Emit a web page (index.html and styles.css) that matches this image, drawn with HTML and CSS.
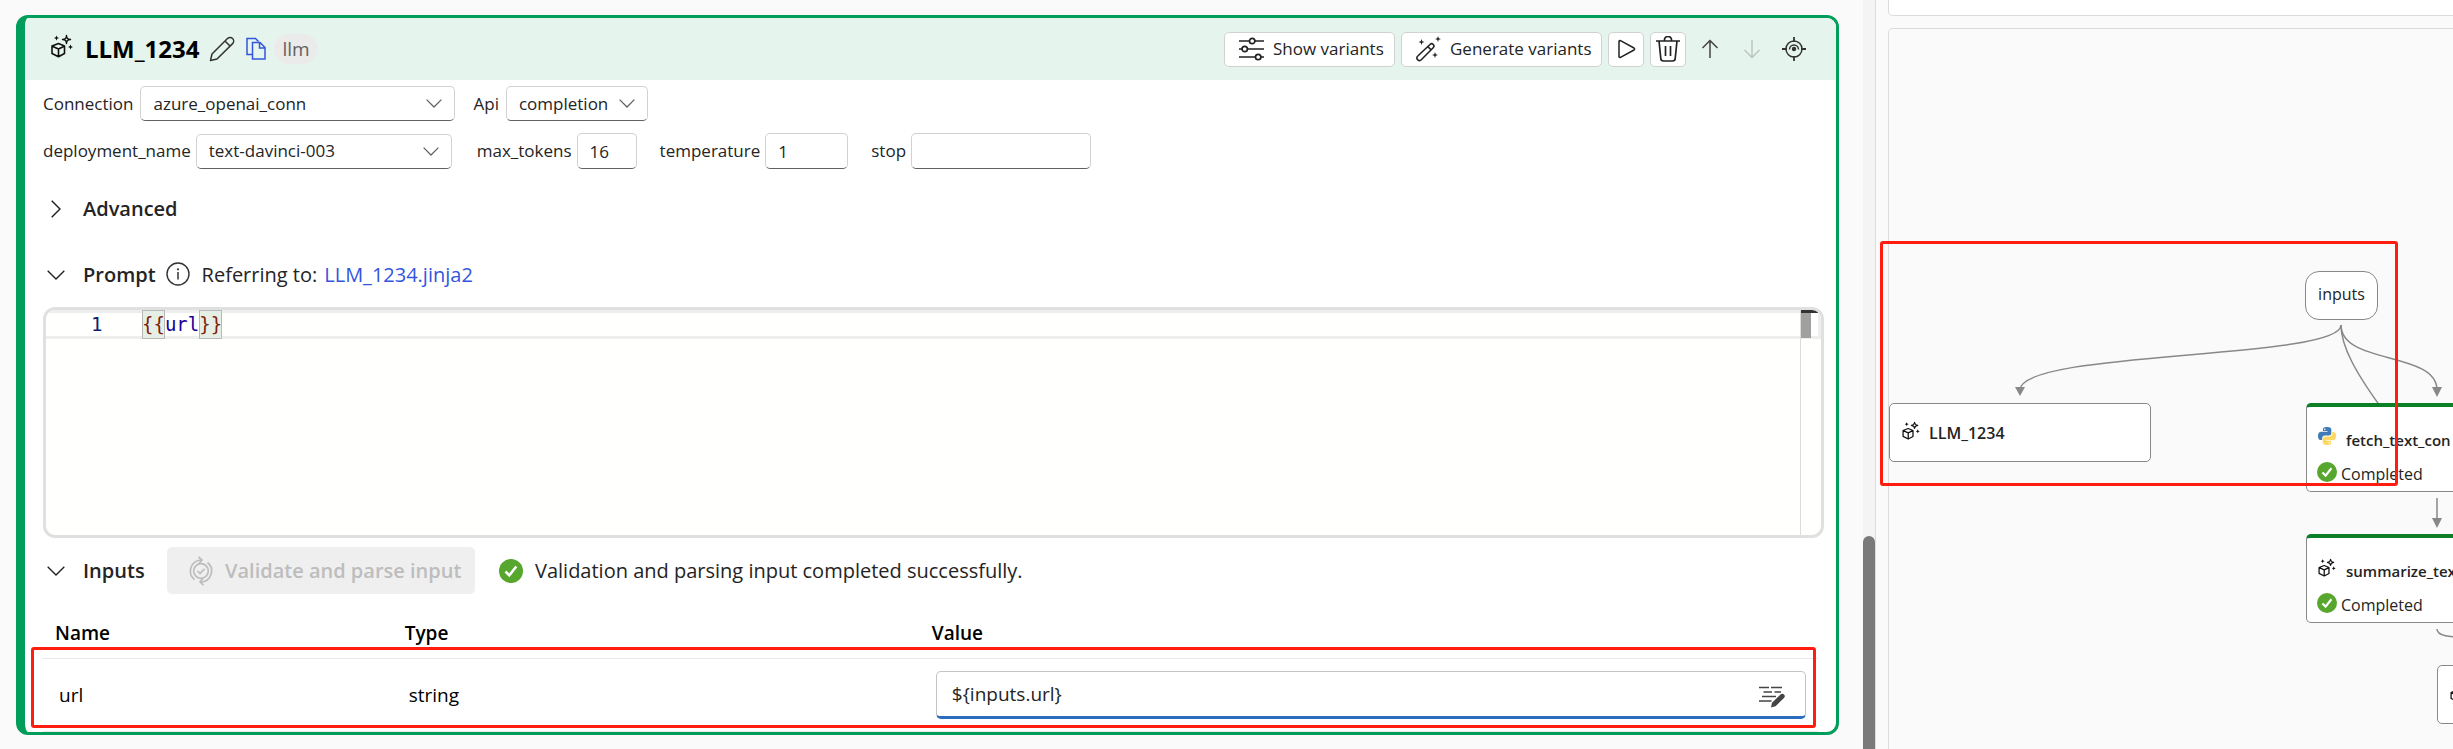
FILE: index.html
```html
<!DOCTYPE html>
<html lang="en">
<head>
<meta charset="utf-8">
<title>Prompt flow</title>
<link rel="stylesheet" href="styles.css">
</head>
<body>
<svg class="defs" aria-hidden="true">
  <symbol id="i-llm" viewBox="0 0 22 24">
    <g fill="none" stroke="#111" stroke-width="1.6" stroke-linejoin="round">
      <path d="M7.500 9.500L13.500 12V19.500L7.500 22.700L1 19.500V12ZM1.200 12.200L7.500 15L13.300 12.200M7.500 15V22.500"/>
      <path d="M15.500 1.500C15.800 4.500 16.500 5.200 19.500 5.500C16.500 5.800 15.800 6.500 15.500 9.500C15.200 6.500 14.500 5.800 11.500 5.500C14.500 5.200 15.200 4.500 15.500 1.500Z" stroke-width="1.400"/>
    </g>
    <path fill="#111" d="M5.500 1.500L6.300 3.200L8 4L6.300 4.800L5.500 6.500L4.700 4.800L3 4L4.700 3.200ZM19.500 10.500L20.300 12.200L22 13L20.300 13.800L19.500 15.500L18.700 13.800L17 13L18.700 12.200Z"/>
  </symbol>
  <symbol id="i-down" viewBox="0 0 18 10">
    <path d="M.7 .7L9 9L17.300 .7" fill="none" stroke="currentColor" stroke-width="1.400"/>
  </symbol>
  <symbol id="i-check" viewBox="0 0 24 24">
    <circle cx="12" cy="12" r="12" fill="#57a62e"/>
    <path d="M6.500 12.500L10.300 16.300L17.300 7.500" fill="none" stroke="#fff" stroke-width="2.600"/>
  </symbol>
</svg>
<div class="app">
  <main class="editor-pane">
    <section class="card">
      <header class="card-head">
        <svg class="ic-llm"><use href="#i-llm"/></svg>
        <h1>LLM_1234</h1>
        <button class="plain edit" aria-label="Rename">
          <svg width="26" height="26" viewBox="0 0 26 26" fill="none" stroke="#333" stroke-width="1.500" stroke-linejoin="round"><path d="M1.500 24.500L3 18L18.500 2.500A3.600 3.600 0 0 1 23.600 7.600L8 23ZM16 5L21 10"/></svg>
        </button>
        <button class="plain copy" aria-label="Copy">
          <svg width="20" height="24" viewBox="0 0 20 24" fill="none" stroke="#3355e0" stroke-width="1.500"><path d="M6 17.500H1V1.500H9.500L12.500 4.500"/><path d="M6.500 5.500H14L19 10.500V22H6.500ZM13.500 5.500V11H19"/></svg>
        </button>
        <span class="pill">llm</span>
        <div class="actions">
          <button class="btn show">
            <svg width="26" height="24" viewBox="0 0 26 24" fill="none" stroke="#222" stroke-width="1.700"><path d="M0 4H10.500M16 4H25M0 12H3M8.500 12H25M0 20H16.500M22 20H25"/><circle cx="13.200" cy="4" r="2.700"/><circle cx="5.700" cy="12" r="2.700"/><circle cx="19.200" cy="20" r="2.700"/></svg>
            Show variants
          </button>
          <button class="btn generate">
            <svg width="26" height="26" viewBox="0 0 26 26" fill="none" stroke="#222" stroke-width="1.600"><path d="M1.800 20L14 8.500A2.200 2.200 0 0 1 17.200 11.700L5 24A2.400 2.400 0 0 1 1.800 20ZM11.800 10.600L15 13.800"/><path fill="#222" stroke="none" d="M5.500 3L6.300 5.200L8.500 6L6.300 6.800L5.500 9L4.700 6.800L2.500 6L4.700 5.200ZM22 0L22.800 2.200L25 3L22.800 3.800L22 6L21.200 3.800L19 3L21.200 2.200ZM19 16L19.800 18.200L22 19L19.800 19.800L19 22L18.200 19.800L16 19L18.200 18.200Z"/></svg>
            Generate variants
          </button>
          <button class="btn square" aria-label="Run">
            <svg width="20" height="20" viewBox="0 0 20 20" fill="none" stroke="#222" stroke-width="1.500" stroke-linejoin="round"><path d="M3 2.500Q3 1 4.500 1.700L18 9Q19.200 10 18 11L4.500 18.300Q3 19 3 17.500Z"/></svg>
          </button>
          <button class="btn square" aria-label="Delete">
            <svg width="24" height="26" viewBox="0 0 24 26" fill="none" stroke="#222" stroke-width="1.700"><path d="M0 5H24M8.500 5V3.500A3.500 3 0 0 1 15.500 3.500V5M3 5L4.800 22.500Q5 25 7.500 25H16.500Q19 25 19.200 22.500L21 5M9.500 10V20M14.500 10V20"/></svg>
          </button>
          <button class="plain step" aria-label="Move up">
            <svg width="18" height="20" viewBox="0 0 18 20" fill="none" stroke="#444" stroke-width="1.500"><path d="M9 19V1.500M1.500 9L9 1.500L16.500 9"/></svg>
          </button>
          <button class="plain step" aria-label="Move down" disabled>
            <svg width="18" height="20" viewBox="0 0 18 20" fill="none" stroke="#bcc5c0" stroke-width="1.500"><path d="M9 1V18.500M1.500 11L9 18.500L16.500 11"/></svg>
          </button>
          <button class="plain step" aria-label="Locate in graph">
            <svg width="24" height="24" viewBox="0 0 24 24" fill="none" stroke="#333" stroke-width="1.500"><circle cx="12" cy="12" r="8"/><path d="M12 0V5M12 19V24M0 12H5M19 12H24" stroke-width="1.800"/><path d="M7.500 12.500A4.500 4.500 0 1 1 16.500 12.500"/><circle cx="12" cy="12" r="2.200" fill="#333" stroke="none"/></svg>
          </button>
        </div>
      </header>
      <div class="card-body">
        <div class="fields">
          <label for="conn">Connection</label>
          <span class="pick conn"><select id="conn"><option>azure_openai_conn</option></select><svg><use href="#i-down"/></svg></span>
          <label for="api">Api</label>
          <span class="pick api"><select id="api"><option>completion</option></select><svg><use href="#i-down"/></svg></span>
        </div>
        <div class="fields second">
          <label for="dep">deployment_name</label>
          <span class="pick dep"><select id="dep"><option>text-davinci-003</option></select><svg><use href="#i-down"/></svg></span>
          <label for="max">max_tokens</label>
          <input class="field max" id="max" value="16">
          <label for="temp">temperature</label>
          <input class="field temp" id="temp" value="1">
          <label for="stop">stop</label>
          <input class="field stop" id="stop">
        </div>
        <div class="section advanced">
          <button class="plain toggle" aria-label="Expand Advanced"><svg width="10" height="18" viewBox="0 0 10 18" fill="none" stroke="#222" stroke-width="1.500"><path d="M.7 .7L9 9L.7 17.300"/></svg></button>
          <h2>Advanced</h2>
        </div>
        <div class="section prompt">
          <button class="plain toggle" aria-label="Collapse Prompt"><svg class="chev"><use href="#i-down"/></svg></button>
          <h2>Prompt</h2>
          <svg class="info" viewBox="0 0 24 24"><circle cx="12" cy="12" r="11" fill="none" stroke="#333" stroke-width="1.400"/><path d="M12 10V17.500" stroke="#333" stroke-width="1.500"/><circle cx="12" cy="7.300" r="1.100" fill="#333"/></svg>
          <span>Referring to:</span>
          <a href="#file">LLM_1234.jinja2</a>
        </div>
        <div class="code">
          <div class="code-line">
            <span class="num">1</span>
            <code><span class="brace">{{</span><span class="var">url</span><span class="brace">}}</span></code>
          </div>
          <div class="ruler"><i class="mark"></i><i class="thumb"></i></div>
        </div>
        <div class="section inputs">
          <button class="plain toggle" aria-label="Collapse Inputs"><svg class="chev"><use href="#i-down"/></svg></button>
          <h2>Inputs</h2>
          <button class="validate" disabled>
            <svg width="24" height="30" viewBox="0 0 24 30" fill="none" stroke="#bdbdbd" stroke-width="1.700"><circle cx="12" cy="15" r="7.300"/><path d="M8.500 15L11 17.500L15.500 12.800M5.500 23.500A11 11 0 0 1 12 4M9.500 .8L13 4L10 7.500M18.500 6.500A11 11 0 0 1 12 26M14.500 29.200L11 26L14 22.500"/></svg>
            Validate and parse input
          </button>
          <svg class="ok"><use href="#i-check"/></svg>
          <span>Validation and parsing input completed successfully.</span>
        </div>
        <div class="table-wrap">
          <table>
            <thead><tr><th class="c-name">Name</th><th class="c-type">Type</th><th>Value</th></tr></thead>
            <tbody><tr>
              <td id="row-url">url</td>
              <td>string</td>
              <td><div class="value"><input aria-labelledby="row-url" value="${inputs.url}">
                <svg width="26" height="22" viewBox="0 0 26 22"><path d="M0 1.500H10M12 1.500H23M4.500 6H13M15.500 6H22M3 10.500H17M0 15H12.500" stroke="#444" stroke-width="1.500"/><path d="M12 21.500L13 16.800L21.500 8.600A2.400 2.400 0 0 1 25 12L16.500 20.300Z" fill="#444"/></svg></div></td>
            </tr></tbody>
          </table>
          <div class="callout callout-row"></div>
        </div>
      </div>
    </section>
    <div class="scroll"><i></i></div>
  </main>
  <aside class="graph-pane">
    <div class="top-box"></div>
    <div class="canvas">
      <svg class="edges" fill="none" stroke="#8a8886" stroke-width="1.500">
        <path d="M452 296C452 331 131 321 131 361"/>
        <path d="M452 296C452 336 548 322 548 361"/>
        <path d="M452 296C452 316 465 343 500 389"/>
        <path d="M548 469V492M548 600C548 607 560 608 580 609"/>
        <path fill="#8a8886" stroke="none" d="M126 358H136L131 367ZM543 358H553L548 368ZM543 489H553L548 499Z"/>
      </svg>
      <div class="node pill-node">inputs</div>
      <div class="node llm-node"><svg class="ic-node"><use href="#i-llm"/></svg>LLM_1234</div>
      <div class="node step-node fetch">
        <div class="node-title"><svg class="ic-py" viewBox="0 0 18 18"><path fill="#3f7ab8" d="M9 0C5.500 0 5 1 5 2.300V4H9.500V4.800H3C1 4.800 0 6.500 0 9S1 13 2.700 13H4.200V11C4.200 9.500 5.300 8.500 6.800 8.500H11C12.300 8.500 13.300 7.500 13.300 6.200V2.500C13.300 .8 12 0 9 0Z"/><path fill="#ffd864" d="M9 18C12.500 18 13 17 13 15.700V14H8.500V13.200H15C17 13.200 18 11.500 18 9S17 5 15.300 5H14.200V7C14.200 8.500 12.700 9.500 11.200 9.500H7C5.700 9.500 4.700 10.500 4.700 11.800V15.500C4.700 17.200 6 18 9 18Z"/><circle cx="6.800" cy="2.300" r=".8" fill="#fff"/><circle cx="11.200" cy="15.700" r=".8" fill="#fff"/></svg>fetch_text_con</div>
        <div class="node-state"><svg class="ok-small"><use href="#i-check"/></svg>Completed</div>
      </div>
      <div class="node step-node summarize">
        <div class="node-title"><svg class="ic-node"><use href="#i-llm"/></svg>summarize_tex</div>
        <div class="node-state"><svg class="ok-small"><use href="#i-check"/></svg>Completed</div>
      </div>
      <div class="node llm-node last"><svg class="ic-node"><use href="#i-llm"/></svg></div>
    </div>
    <div class="callout callout-graph"></div>
  </aside>
</div>
</body>
</html>
```
FILE: styles.css
```css
* { box-sizing: border-box; }
body {
  margin: 0;
  background: #fafafa;
  color: #242424;
  font-family: "Open Sans", "Noto Sans", sans-serif;
  font-size: 17px;
  line-height: 24px;
}
button, input, select { font: inherit; color: inherit; }
h1, h2 { margin: 0; }
svg { display: block; flex: none; }
.defs { display: none; }

.app {
  display: grid;
  grid-template-columns: minmax(0, 1875fr) minmax(0, 578fr);
  grid-template-rows: 100vh;
  overflow: hidden;
}
.editor-pane { display: flex; align-items: flex-start; }
.graph-pane {
  position: relative;
  overflow: hidden;
  display: flex;
  flex-direction: column;
  gap: 12px;
  padding-left: 12px;
  border-left: 1px solid #dcdcdc;
}

.card {
  flex: 1;
  min-width: 0;
  margin: 15px 24px 0 16px;
  border: 3px solid #009e5a;
  border-left-width: 9px;
  border-radius: 12px;
  background: #fff;
  overflow: hidden;
}
.scroll { width: 12px; align-self: stretch; background: #f4f4f4; padding-top: 536px; }
.scroll i { display: block; height: 100%; background: #7a7a7a; border-radius: 6px 6px 0 0; }

.card-head {
  display: flex;
  align-items: center;
  height: 62px;
  padding: 0 24px 0 26px;
  background: #e5f4ec;
}
.ic-llm { width: 22px; height: 24px; margin: 0 12px 6px 0; }
.card-head h1 { width: 124px; font-size: 24px; line-height: 32px; font-weight: 700; color: #000; }
.plain { border: 0; padding: 0; background: none; display: flex; align-items: center; justify-content: center; }
.edit { margin-right: 11px; }
.copy { margin-right: 8px; }
.pill { width: 44px; height: 30px; border-radius: 15px; background: #ebebeb; color: #616161; text-align: center; font-size: 19px; line-height: 30px; }
.actions { display: flex; align-items: center; gap: 6px; margin-left: auto; }
.btn {
  display: flex;
  align-items: center;
  gap: 8px;
  height: 35px;
  padding: 0 14px;
  border: 1px solid #d1d1d1;
  border-radius: 5px;
  background: #fff;
  white-space: nowrap;
}
.show { width: 171px; }
.generate { width: 201px; }
.square { width: 36px; padding: 0; justify-content: center; }
.step { width: 36px; height: 36px; }

.card-body { padding: 6px 12px 0 18px; }
.fields { display: flex; align-items: center; height: 35px; }
.fields label { margin-right: 7px; white-space: nowrap; }
.pick { position: relative; display: flex; margin-right: 18px; }
.pick select {
  appearance: none;
  width: 100%;
  height: 35px;
  padding: 0 34px 0 12px;
}
.pick select, .field {
  border: 1px solid #d1d1d1;
  border-bottom-color: #616161;
  border-radius: 5px;
  background: #fff;
}
.pick svg { position: absolute; right: 13px; top: 13px; width: 16px; height: 9px; color: #616161; pointer-events: none; }
.conn { width: 315px; }
.api { width: 142px; }
.second { margin-top: 12px; height: 36px; }
.second label { margin-right: 5px; }
.dep { width: 256px; margin-right: 25px; }
.field { height: 36px; padding: 0 12px; margin-right: 23px; }
.max { width: 60px; }
.temp { width: 83px; }
.stop { width: 180px; }

.section { display: flex; align-items: center; height: 30px; font-size: 20px; white-space: nowrap; }
.section h2 { font-size: 20px; line-height: 28px; font-weight: 600; }
.toggle { width: 26px; margin-right: 14px; height: 30px; }
.chev { width: 18px; height: 10px; }
.advanced { margin-top: 25px; }
.prompt { margin-top: 36px; }
.info { width: 24px; height: 24px; margin: 0 12px 3px 10px; }
.section a { margin-left: 7px; color: #3355e0; text-decoration: none; }

.code {
  position: relative;
  height: 231px;
  margin-top: 17px;
  border: 3px solid #e0e0e0;
  border-radius: 12px;
  background: #fffffe;
  overflow: hidden;
  font-family: "DejaVu Sans Mono", "Liberation Mono", monospace;
  font-size: 19px;
}
.code-line { display: flex; height: 29px; line-height: 29px; border: 3px solid #eee; border-left: 0; }
.num { width: 96px; padding-left: 45px; line-height: 23px; color: #0b216f; }
.code-line code { display: flex; height: 29px; margin-top: -3px; line-height: 29px; font: inherit; }
.brace { background: #e5efe5; box-shadow: inset 0 0 0 1px #b9b9b9; color: #811f0c; }
.brace, .var { line-height: 29px; }
.var { color: #1a0099; }
.ruler { position: absolute; right: 0; top: 0; bottom: 0; width: 21px; border-left: 1px solid #dcdcdc; }
.mark { display: block; width: 17px; height: 3px; background: #333; }
.thumb { display: block; width: 10px; height: 25px; background: #a0a0a0; }

.inputs { margin-top: 9px; height: 47px; }
.inputs h2 { width: 84px; }
.validate {
  display: flex;
  align-items: center;
  gap: 12px;
  width: 308px;
  height: 47px;
  padding: 0 0 0 22px;
  border: 0;
  border-radius: 5px;
  background: #efefef;
  color: #bdbdbd;
  font-weight: 600;
}
.ok { width: 24px; height: 24px; margin: 0 12px 0 24px; }

.table-wrap { position: relative; margin: 14px 6px 0 0; }
table { width: 100%; border-collapse: separate; border-spacing: 0; table-layout: fixed; color: #000; }
th { height: 51px; padding: 0 0 0 12px; text-align: left; font-size: 19px; font-weight: 600; border-bottom: 1px solid #e8e8e8; }
.c-name { width: 19.7%; }
.c-type { width: 29.7%; }
td { height: 73px; padding: 0 12px 0 16px; font-size: 19px; border-bottom: 1px solid #e8e8e8; }
.value {
  display: flex;
  align-items: center;
  height: 48px;
  padding: 0 20px 0 15px;
  border: 1px solid #c4c4c4;
  border-bottom: 3px solid #2b6cbf;
  border-radius: 5px;
}
.value input { flex: 1; min-width: 0; border: 0; padding: 0; outline: 0; background: none; color: #242424; }
.value svg { margin-top: 6px; }
.callout { position: absolute; border: 3px solid #ff1d0f; border-radius: 3px; pointer-events: none; }
.callout-row { left: -12px; right: 2px; top: 39px; height: 81px; }
.callout-graph { left: 4px; top: 241px; width: 518px; height: 245px; }

.top-box { height: 16px; margin-right: -10px; border: 1px solid #dcdcdc; border-top: 0; border-radius: 0 0 5px 5px; background: #fff; }
.canvas { position: relative; flex: 1; margin-right: -10px; border: 1px solid #dcdcdc; border-bottom: 0; border-radius: 5px 5px 0 0; }
.edges { position: absolute; left: 0; top: 0; width: 100%; height: 100%; }
.node { position: absolute; background: #fff; border: 1px solid #8a8886; border-radius: 5px; font-size: 16px; line-height: 20px; white-space: nowrap; }
.pill-node { left: 416px; top: 242px; width: 73px; height: 49px; border-radius: 14px; text-align: center; line-height: 44px; }
.llm-node { left: 0; top: 374px; width: 262px; height: 59px; display: flex; align-items: center; padding-left: 12px; font-weight: 600; }
.ic-node { width: 18px; height: 19px; margin: 0 9px 4px 0; }
.step-node { left: 417px; width: 262px; height: 89px; border-top: 4px solid #0b8026; padding: 21px 0 0 10px; }
.fetch { top: 374px; }
.summarize { top: 505px; }
.last { left: 548px; top: 636px; }
.node-title, .node-state { display: flex; align-items: center; }
.node-title { font-size: 15px; font-weight: 600; padding-left: 1px; height: 24px; }
.ic-py { width: 18px; height: 18px; margin: 0 10px 8px 0; }
.node-title .ic-node { margin: 0 10px 8px 0; }
.node-state { margin-top: 10px; }
.ok-small { width: 20px; height: 20px; margin: 0 4px 4px 0; }
```
